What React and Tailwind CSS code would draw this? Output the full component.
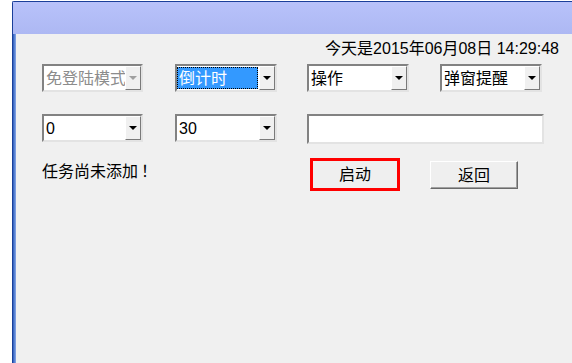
import React from 'react';

const font = { fontFamily: '"Liberation Sans", "Noto Sans CJK SC", sans-serif' };

function Arrow({ disabled }) {
  return (
    <div className="w-[16px] h-full shrink-0 flex items-center justify-center bg-[#f0f0f0] border-t border-l border-t-white border-l-white border-b border-r border-b-[#7a7a7a] border-r-[#7a7a7a]">
      <div
        className={`w-0 h-0 border-l-[4px] border-r-[4px] border-t-[4px] border-l-transparent border-r-transparent ${
          disabled ? 'border-t-[#a0a0a0]' : 'border-t-black'
        }`}
      />
    </div>
  );
}

function Combo({ text, width = 'w-[102px]', disabled, selected, className = '' }) {
  return (
    <div
      className={`${width} h-[28px] flex bg-white border-2 border-t-[#828282] border-l-[#828282] border-b-[#e3e3e3] border-r-[#e3e3e3] ${className}`}
    >
      {selected ? (
        <div className="flex-1 my-[1px] mr-[1px] flex items-center bg-[#3399ff] border border-dotted border-black text-white pl-[1px] pt-[1px] whitespace-nowrap overflow-hidden">
          {text}
        </div>
      ) : (
        <div
          className={`flex-1 flex items-center pl-[2px] pt-[1px] whitespace-nowrap overflow-hidden ${
            disabled ? 'text-[#8c8c8c]' : 'text-black'
          }`}
        >
          {text}
        </div>
      )}
      <Arrow disabled={disabled} />
    </div>
  );
}

export default function App() {
  return (
    <div className="w-[572px] h-[363px] bg-white flex pt-[1px] pl-[12px] overflow-hidden text-[16px]" style={font}>
      <div className="flex-1 flex flex-col border-l border-t border-[#1a3f9a] rounded-tl-[2px]">
        <div className="h-[32px] shrink-0 bg-linear-to-b from-[#b8c2fa] to-[#adb8f3]" />
        <div className="flex-1 flex">
          <div className="w-[3px] bg-linear-to-r from-[#2a5cbc] to-[#8aa8e8]" />
          <div className="flex-1 bg-[#f0f0f0] flex flex-col text-black">
            <div className="mt-[5px] h-[20px] leading-[20px] text-right pr-[13px] whitespace-nowrap">
              今天是2015年06月08日 14:29:48
            </div>

            <div className="mt-[5px] flex pl-[26px]">
              <Combo text="免登陆模式" width="w-[101px]" disabled />
              <Combo text="倒计时" selected className="ml-[32px]" />
              <Combo text="操作" className="ml-[30px]" />
              <Combo text="弹窗提醒" className="ml-[31px]" />
            </div>

            <div className="mt-[22px] flex items-start pl-[26px]">
              <Combo text="0" width="w-[101px]" />
              <Combo text="30" className="ml-[32px]" />
              <div className="ml-[30px] w-[237px] h-[30px] bg-white border-2 border-t-[#828282] border-l-[#828282] border-b-[#e3e3e3] border-r-[#e3e3e3]" />
            </div>

            <div className="mt-[14px] flex items-start pl-[26px]">
              <div className="w-[268px] mt-[4px] h-[20px] leading-[20px] whitespace-nowrap">
                任务尚未添加<span className="inline-block w-[16px] pl-[3px]">！</span>
              </div>
              <div className="w-[90px] h-[33px] border-[3px] border-[#ff0000] bg-[#efefef] flex items-center justify-center pt-[1px]">
                启动
              </div>
              <div className="ml-[30px] mt-[3px] w-[88px] h-[28px] bg-[#efefef] border border-t-white border-l-white border-b-[#6a6a6a] border-r-[#6a6a6a] shadow-[inset_-1px_-1px_0_#a0a0a0] flex items-center justify-center pt-[1px]">
                返回
              </div>
            </div>
          </div>
        </div>
      </div>
    </div>
  );
}
